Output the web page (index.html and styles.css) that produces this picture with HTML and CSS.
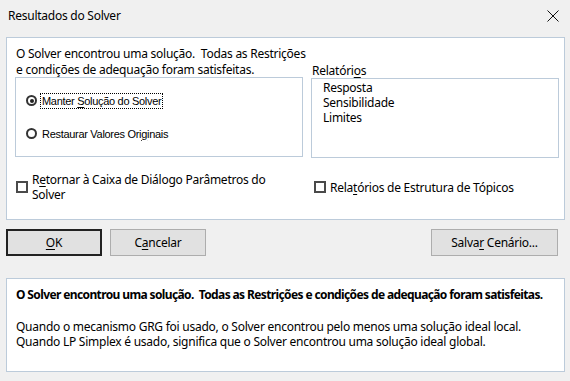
FILE: index.html
```
<!DOCTYPE html>
<html lang="pt">
<head>
    <meta charset="UTF-8">
    <title>Resultados do Solver</title>
    <link rel="stylesheet" href="styles.css">
</head>
<body>
    <div class="dialog">
        <div class="titlebar">
            <span class="title">Resultados do Solver</span>
            <svg class="close" width="12" height="12" viewBox="0 0 12 12">
                <path d="M0.5 0.5 L11.5 11.5 M11.5 0.5 L0.5 11.5" stroke="#111" stroke-width="1" fill="none"/>
            </svg>
        </div>

        <div class="panel main">
            <div class="columns">
                <div class="left">
                    <p class="message">O Solver encontrou uma solução.&nbsp; Todas as Restrições<br>e condições de adequação foram satisfeitas.</p>
                    <div class="groupbox">
                        <label class="radio">
                            <span class="dot checked"></span>
                            <span class="focus">Manter <u>S</u>olução do Solver</span>
                        </label>
                        <label class="radio">
                            <span class="dot"></span>
                            <span class="plain">Restaurar Valores Ori<u>g</u>inais</span>
                        </label>
                    </div>
                </div>
                <div class="right">
                    <div class="list-label">Relatóri<u>o</u>s</div>
                    <ul class="listbox">
                        <li>Resposta</li>
                        <li>Sensibilidade</li>
                        <li>Limites</li>
                    </ul>
                </div>
            </div>
            <div class="checks">
                <label class="check first">
                    <span class="box"></span>
                    <span>R<u>e</u>tornar à Caixa de Diálogo Parâmetros do<br>Solver</span>
                </label>
                <label class="check second">
                    <span class="box"></span>
                    <span>Rela<u>t</u>órios de Estrutura de Tópicos</span>
                </label>
            </div>
        </div>

        <div class="buttons">
            <button class="btn default"><u>O</u>K</button>
            <button class="btn">C<u>a</u>ncelar</button>
            <span class="spacer"></span>
            <button class="btn wide">Salva<u>r</u> Cenário...</button>
        </div>

        <div class="panel info">
            <p class="bold">O Solver encontrou uma solução.&nbsp; Todas as Restrições e condições de adequação foram satisfeitas.</p>
            <p>Quando o mecanismo GRG foi usado, o Solver encontrou pelo menos uma solução ideal local.<br>Quando LP Simplex é usado, significa que o Solver encontrou uma solução ideal global.</p>
        </div>
    </div>
</body>
</html>
```

FILE: styles.css
```
body {
    margin: 0;
    background: #f0f0f0;
    font-family: "Noto Sans", "Open Sans", sans-serif;
    font-size: 12px;
    letter-spacing: -0.25px;
    color: #000;
}

u {
    text-decoration: underline;
    text-underline-offset: 2px;
}

.dialog {
    width: 570px;
    height: 381px;
}

.titlebar {
    height: 31px;
    display: flex;
    align-items: center;
    justify-content: space-between;
    padding: 0 8px 0 8px;
    box-sizing: border-box;
}

.close {
    margin-right: 3px;
}

.panel {
    background: #fff;
    border: 1px solid #bccbda;
    margin: 0 5px 0 6px;
}

.main {
    margin-top: 6px;
    height: 183px;
    box-sizing: border-box;
    padding: 8px 6px 0 8px;
}

.columns {
    display: flex;
    gap: 8px;
}

.left {
    width: 288px;
}

.message {
    margin: 0 0 0 1px;
    line-height: 16px;
    white-space: nowrap;
}

.groupbox {
    margin-top: -1px;
    height: 80px;
    border: 1px solid #bccbda;
    box-sizing: border-box;
    padding: 14px 0 0 10px;
    display: flex;
    flex-direction: column;
    gap: 16px;
}

.radio {
    display: flex;
    align-items: center;
    font-family: "Liberation Sans", Arial, sans-serif;
    font-size: 11px;
    letter-spacing: -0.3px;
    height: 17px;
}

.dot {
    width: 7px;
    height: 7px;
    border: 2px solid #333;
    border-radius: 50%;
    margin-right: 5px;
    position: relative;
    flex: none;
}

.dot.checked::after {
    content: "";
    position: absolute;
    left: 1.5px;
    top: 1.5px;
    width: 4px;
    height: 4px;
    border-radius: 50%;
    background: #222;
}

.focus {
    border: 1px dotted #000;
    padding: 1px;
    margin-left: -2px;
}

.right {
    flex: 1;
    padding-top: 17px;
}

.list-label {
    line-height: 15px;
    margin-left: 1px;
}

.listbox {
    list-style: none;
    margin: 0;
    height: 80px;
    box-sizing: border-box;
    border: 1px solid #bccbda;
    padding: 1px 0 0 11px;
    width: 248px;
}

.listbox li {
    line-height: 15px;
}

.checks {
    display: flex;
    margin-top: 14px;
}

.check {
    display: flex;
    align-items: center;
    line-height: 15px;
    white-space: nowrap;
}

.check.first {
    width: 298px;
    margin-left: 1px;
}

.box {
    width: 8px;
    height: 8px;
    border: 2px solid #4a4a4a;
    margin-right: 4px;
    flex: none;
}

.buttons {
    display: flex;
    gap: 8px;
    margin: 9px 12px 0 6px;
    height: 27px;
}

.btn {
    width: 96px;
    height: 27px;
    background: #e1e1e1;
    border: 1px solid #adadad;
    font-family: inherit;
    font-size: 12px;
    letter-spacing: inherit;
    padding: 0;
    color: #000;
}

.btn.default {
    border: 2px solid #222;
}

.btn.wide {
    width: 127px;
}

.spacer {
    flex: 1;
}

.info {
    margin-top: 22px;
    height: 94px;
    box-sizing: border-box;
    padding: 8px 8px 0 9px;
}

.info p {
    margin: 0;
    line-height: 15px;
    white-space: nowrap;
}

.info .bold {
    font-weight: bold;
    letter-spacing: -0.62px;
    margin-bottom: 17px;
}
```
